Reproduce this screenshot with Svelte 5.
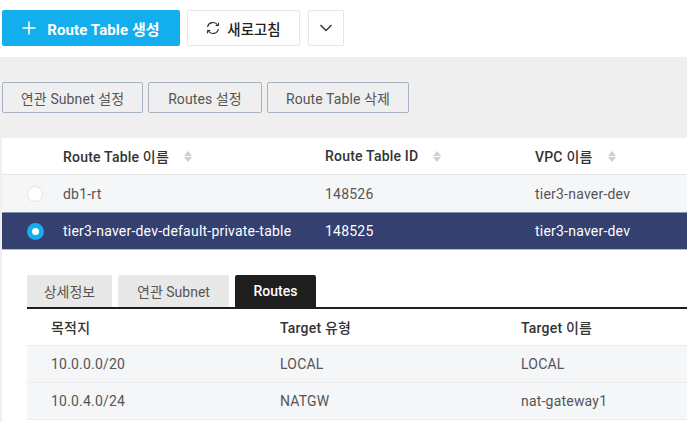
<script>
  const rows = [
    { name: 'db1-rt', id: '148526', vpc: 'tier3-naver-dev', selected: false },
    { name: 'tier3-naver-dev-default-private-table', id: '148525', vpc: 'tier3-naver-dev', selected: true }
  ];
  const routes = [
    ['10.0.0.0/20', 'LOCAL', 'LOCAL'],
    ['10.0.4.0/24', 'NATGW', 'nat-gateway1']
  ];
</script>

<div class="page">
  <header class="top">
    <button class="btn primary">
      <svg width="14" height="14" viewBox="0 0 14 14"><path d="M7 0.5v13M0.5 7h13" stroke="#fff" stroke-width="1.6" fill="none"/></svg>
      <span>Route Table 생성</span>
    </button>
    <button class="btn refresh">
      <svg width="14" height="14" viewBox="0 0 14 14" fill="none" stroke="#222" stroke-width="1.2">
        <path d="M1.6 6A5.5 5.5 0 0 1 11.6 4"/><path d="M12.4 8A5.5 5.5 0 0 1 2.4 10"/>
        <path d="M12.6 1.6V4.6H9.6" stroke-width="1"/><path d="M1.4 12.4V9.4H4.4" stroke-width="1"/>
      </svg>
      <span>새로고침</span>
    </button>
    <button class="btn chev" aria-label="more">
      <svg width="14" height="8" viewBox="0 0 14 8"><path d="M1.5 1l5.5 5.5L12.5 1" stroke="#333" stroke-width="1.4" fill="none"/></svg>
    </button>
  </header>

  <main class="band">
    <div class="actions">
      <button class="act a1">연관 Subnet 설정</button>
      <button class="act a2">Routes 설정</button>
      <button class="act a3">Route Table 삭제</button>
    </div>

    <section class="panel">
      <div class="row head">
        <div></div>
        <div class="th">Route Table 이름 <i class="sort"></i></div>
        <div class="th">Route Table ID <i class="sort"></i></div>
        <div class="th">VPC 이름 <i class="sort"></i></div>
      </div>
      {#each rows as r}
        <div class="row body" class:selected={r.selected}>
          <div class="radio-cell"><span class="radio" class:on={r.selected}></span></div>
          <div>{r.name}</div>
          <div>{r.id}</div>
          <div>{r.vpc}</div>
        </div>
      {/each}

      <div class="detail">
        <div class="tabs">
          <div class="tab t1">상세정보</div>
          <div class="tab t2">연관 Subnet</div>
          <div class="tab t3 active">Routes</div>
        </div>
        <div class="sub subhead">
          <div>목적지</div><div>Target 유형</div><div>Target 이름</div>
        </div>
        {#each routes as rt}
          <div class="sub subbody">
            <div>{rt[0]}</div><div>{rt[1]}</div><div>{rt[2]}</div>
          </div>
        {/each}
      </div>
    </section>
  </main>
</div>

<style>
  :global(body) { margin: 0; background: #fff; }
  .page {
    width: 687px; height: 422px; overflow: hidden;
    font-family: Roboto, "Noto Sans CJK KR", sans-serif;
    font-size: 14px; color: #333;
    display: flex; flex-direction: column;
  }
  button { font-family: inherit; cursor: pointer; }
  .top { height: 57px; flex: none; box-sizing: border-box; padding: 10px 0 0 2px; display: flex; gap: 7px; background: #fff; }
  .btn {
    height: 36px; box-sizing: border-box; border-radius: 2px; display: flex;
    align-items: center; justify-content: center; font-size: 14px; font-weight: 700;
    padding: 0; background: #fff; border: 1px solid #e6e6e6; color: #222;
  }
  .primary { width: 178px; background: #13aeee; border: 0; color: #fff; gap: 11px; font-size: 15px; letter-spacing: 0.1px; }
  .refresh { width: 113px; gap: 7px; font-weight: 500; font-size: 14.5px; }
  .chev { width: 36px; margin-left: 1px; }
  .band { flex: 1; background: #efefef; padding: 25px 0 0 2px; display: flex; flex-direction: column; }
  .actions { display: flex; gap: 5px; height: 31px; margin-bottom: 25px; flex: none; }
  .act {
    height: 31px; box-sizing: border-box; background: #efefef; border: 1px solid #a9b4c2;
    border-radius: 2px; color: #555; font-size: 14px; letter-spacing: 0.1px; padding: 0;
  }
  .a1 { width: 141px; } .a2 { width: 114px; } .a3 { width: 142px; }
  .panel { flex: 1; background: #fff; display: flex; flex-direction: column; }
  .row { display: grid; grid-template-columns: 61px 262px 210px 1fr; align-items: center; }
  .head { height: 37px; color: #333; font-weight: 500; border-bottom: 1px solid #e6e6e6; box-sizing: border-box; letter-spacing: 0.2px; }
  .th { display: flex; align-items: center; gap: 11px; }
  .sort { width: 8px; height: 11px; position: relative; display: block; margin: 1px 0 0 4px; }
  .sort::before, .sort::after { content: ""; position: absolute; left: 0; border-left: 4px solid transparent; border-right: 4px solid transparent; }
  .sort::before { top: 0; border-bottom: 5px solid #cfcfcf; }
  .sort::after { bottom: 0; border-top: 5px solid #cfcfcf; }
  .body { height: 37px; background: #f5f6f8; color: #555; box-sizing: border-box; letter-spacing: 0.22px; }
  .selected { height: 38px; background: #34406f; color: #fff; border-top: 1px solid #8a93ad; border-bottom: 1px solid #b5bac8; }
  .radio-cell { display: flex; justify-content: flex-start; padding-left: 25px; }
  .radio { width: 16px; height: 16px; box-sizing: border-box; border-radius: 50%; background: #fff; border: 1px solid #e3e3e3; display: block; }
  .radio.on { width: 17px; height: 17px; background: #fff; border: 5px solid #13aeee; }
  .detail { padding: 25px 0 0 25px; flex: 1; }
  .tabs { display: flex; gap: 6px; height: 34px; box-sizing: border-box; border-bottom: 2px solid #1e1e1e; }
  .tab {
    height: 32px; display: flex; align-items: center; justify-content: center;
    background: #e8e8e8; color: #555; border-radius: 2px 2px 0 0;
  }
  .t1 { width: 85px; } .t2 { width: 111px; }
  .t3 { width: 81px; }
  .active { background: #1e1e1e; color: #fff; font-weight: 500; }
  .sub { display: grid; grid-template-columns: 229px 241px 1fr; padding-left: 24px; align-items: center; box-sizing: border-box; letter-spacing: 0.2px; }
  .subhead { height: 37px; font-weight: 500; color: #333; border-bottom: 1px solid #ececec; }
  .subbody { height: 37px; background: #f5f6f8; color: #555; border-bottom: 1px solid #ececec; }
</style>
